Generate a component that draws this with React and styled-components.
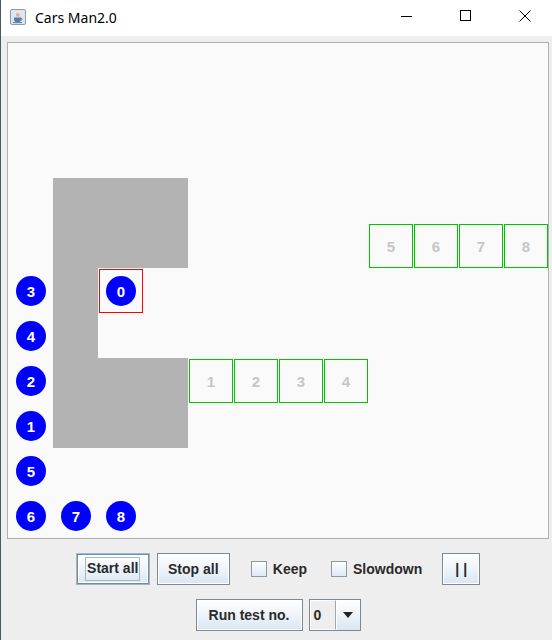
import styled, { createGlobalStyle } from "styled-components";

const GlobalStyle = createGlobalStyle`
    html, body {
        margin: 0;
        padding: 0;
        background: #eeeeee;
    }
    #root {
        width: 552px;
        height: 640px;
    }
`

const CELL = 45;

const walls = [
    { x: 45, y: 135, w: 135, h: 90 },
    { x: 45, y: 225, w: 45, h: 90 },
    { x: 45, y: 315, w: 135, h: 90 },
];

const slots = [
    { n: 1, c: 4, r: 7 }, { n: 2, c: 5, r: 7 }, { n: 3, c: 6, r: 7 }, { n: 4, c: 7, r: 7 },
    { n: 5, c: 8, r: 4 }, { n: 6, c: 9, r: 4 }, { n: 7, c: 10, r: 4 }, { n: 8, c: 11, r: 4 },
];

const cars = [
    { n: 3, c: 0, r: 5 }, { n: 4, c: 0, r: 6 }, { n: 2, c: 0, r: 7 }, { n: 1, c: 0, r: 8 },
    { n: 5, c: 0, r: 9 }, { n: 6, c: 0, r: 10 }, { n: 7, c: 1, r: 10 }, { n: 8, c: 2, r: 10 },
    { n: 0, c: 2, r: 5, selected: true },
];

function JavaIcon() {
    return (
        <svg width="16" height="16" viewBox="0 0 16 16">
            <rect x="0.5" y="0.5" width="15" height="15" rx="1.5" fill="#dfe6ee" stroke="#8a9aab" />
            <path d="M4 8.5h7v2.2c0 1.6-1.5 2.6-3.5 2.6S4 12.3 4 10.7z" fill="#5b7ea6" />
            <path d="M11 9.2c1.4 0 1.6 1.8 0 2" stroke="#5b7ea6" strokeWidth="1" fill="none" />
            <path d="M3 13.6h9" stroke="#5b7ea6" strokeWidth="1" />
            <path d="M7 7.5c-1-1 1-2 0-3.2M8.8 7.5c-0.8-0.9 0.9-1.6 0.1-2.8" stroke="#e8762d" strokeWidth="1" fill="none" />
        </svg>
    )
}

export default function App() {
    return (
        <Window>
            <GlobalStyle />
            <TitleBar>
                <TitleIcon><JavaIcon /></TitleIcon>
                <Title>Cars Man2.0</Title>
                <WinButtons>
                    <WinButton>
                        <svg width="12" height="12" viewBox="0 0 12 12"><path d="M0 6.5h11" stroke="#000" /></svg>
                    </WinButton>
                    <WinButton>
                        <svg width="12" height="12" viewBox="0 0 12 12"><rect x="0.5" y="0.5" width="10" height="10" fill="none" stroke="#000" /></svg>
                    </WinButton>
                    <WinButton>
                        <svg width="12" height="12" viewBox="0 0 12 12"><path d="M0.5 0.5l11 11M11.5 0.5l-11 11" stroke="#000" /></svg>
                    </WinButton>
                </WinButtons>
            </TitleBar>
            <Content>
                <Board>
                    {walls.map((w, i) => (
                        <Wall key={i} style={{ left: w.x, top: w.y, width: w.w, height: w.h }} />
                    ))}
                    {slots.map(s => (
                        <Slot key={'s' + s.n} style={{ left: s.c * CELL + 1, top: s.r * CELL + 1 }}>{s.n}</Slot>
                    ))}
                    {cars.map(c => (
                        <Cell key={'c' + c.n} $selected={c.selected} style={{ left: c.c * CELL + 1, top: c.r * CELL + 1 }}>
                            <Car>{c.n}</Car>
                        </Cell>
                    ))}
                </Board>
                <Controls>
                    <Row>
                        <Button $default $w={74}><Focus>Start all</Focus></Button>
                        <Button $w={73} $ml={7}>Stop all</Button>
                        <Check $ml={21}><Box />Keep</Check>
                        <Check $ml={24}><Box />Slowdown</Check>
                        <Button $w={38} $ml={20}>| |</Button>
                    </Row>
                    <Row>
                        <Button $w={107}>Run test no.</Button>
                        <Combo>
                            <ComboValue>0</ComboValue>
                            <ComboArrow>
                                <svg width="10" height="6" viewBox="0 0 10 6"><path d="M0 0h10L5 6z" fill="#222" /></svg>
                            </ComboArrow>
                        </Combo>
                    </Row>
                </Controls>
            </Content>
        </Window>
    )
}

const Window = styled.div`
    width: 552px;
    height: 640px;
    display: flex;
    flex-direction: column;
    background: #eeeeee;
    border-left: 1px solid #4a5a60;
    box-sizing: border-box;
    overflow: hidden;
`

const TitleBar = styled.div`
    height: 36px;
    flex-shrink: 0;
    background: #ffffff;
    display: flex;
    align-items: center;
    padding-left: 9px;
`

const TitleIcon = styled.div`
    width: 16px;
    height: 16px;
    display: flex;
    margin-top: -2px;
`

const Title = styled.div`
    margin-left: 9px;
    margin-top: -2px;
    font-family: "Noto Sans", "Open Sans", sans-serif;
    font-size: 14px;
    color: #000;
`

const WinButtons = styled.div`
    margin-left: auto;
    display: flex;
    height: 100%;
    margin-right: -2px;
`

const WinButton = styled.div`
    width: 59px;
    height: 100%;
    display: flex;
    align-items: center;
    justify-content: center;
    margin-top: -2px;
`

const Content = styled.div`
    flex: 1;
    display: flex;
    flex-direction: column;
    padding: 6px 3px 0 6px;
`

const Board = styled.div`
    position: relative;
    width: 540px;
    height: 495px;
    background: #fafafa;
    border: 1px solid #b0b0b0;
    overflow: hidden;
`

const Wall = styled.div`
    position: absolute;
    background: #b3b3b3;
`

const Slot = styled.div`
    position: absolute;
    width: 44px;
    height: 44px;
    box-sizing: border-box;
    border: 1px solid #00c400;
    display: flex;
    align-items: center;
    justify-content: center;
    font-family: "Liberation Sans", Arial, sans-serif;
    font-weight: bold;
    font-size: 15px;
    color: #c6c6c6;
`

const Cell = styled.div`
    position: absolute;
    width: 44px;
    height: 44px;
    box-sizing: border-box;
    border: 1px solid ${props => props.$selected ? '#ff0000' : 'transparent'};
    display: flex;
    align-items: center;
    justify-content: center;
`

const Car = styled.div`
    width: 30px;
    height: 30px;
    border-radius: 50%;
    background: #0000ff;
    color: #ffffff;
    display: flex;
    align-items: center;
    justify-content: center;
    font-family: "Liberation Sans", Arial, sans-serif;
    font-weight: bold;
    font-size: 15px;
`

const Controls = styled.div`
    display: flex;
    flex-direction: column;
    align-items: center;
    width: 542px;
    padding-top: 14px;
    gap: 14px;
`

const Row = styled.div`
    display: flex;
    align-items: center;
    justify-content: center;
    height: 32px;
`

const Button = styled.div`
    width: ${props => props.$w}px;
    height: 32px;
    margin-left: ${props => props.$ml || 0}px;
    box-sizing: border-box;
    display: flex;
    align-items: center;
    justify-content: center;
    border: 1px solid ${props => props.$default ? '#9fb6cf' : '#7a8a99'};
    box-shadow: ${props => props.$default ? 'inset 0 0 0 1px #7a8a99, inset 0 0 0 2px #ffffff' : 'inset 0 0 0 1px #ffffff'};
    background: linear-gradient(#ffffff 0%, #f3f7fb 35%, #dae6f2 100%);
    font-family: "Liberation Sans", Arial, sans-serif;
    font-weight: bold;
    font-size: 14px;
    color: #2a2a2a;
    white-space: nowrap;
`

const Focus = styled.span`
    border: 1px solid #a3b8cc;
    padding: 3px 1px 4px 1px;
    line-height: 15px;
`

const Check = styled.div`
    display: flex;
    align-items: center;
    gap: 6px;
    margin-left: ${props => props.$ml || 0}px;
    font-family: "Liberation Sans", Arial, sans-serif;
    font-weight: bold;
    font-size: 14px;
    color: #2a2a2a;
`

const Box = styled.span`
    width: 16px;
    height: 16px;
    box-sizing: border-box;
    border: 1px solid #8a99a6;
    background: linear-gradient(#ffffff, #dde8f3);
`

const Combo = styled.div`
    margin-left: 6px;
    width: 52px;
    height: 32px;
    box-sizing: border-box;
    border: 1px solid #7a8a99;
    display: flex;
`

const ComboValue = styled.div`
    width: 26px;
    box-sizing: border-box;
    border: 1px solid #ffffff;
    border-right: 1px solid #9aa8b5;
    background: #eeeeee;
    display: flex;
    align-items: center;
    padding-left: 3px;
    font-family: "Liberation Sans", Arial, sans-serif;
    font-weight: bold;
    font-size: 14px;
    color: #2a2a2a;
`

const ComboArrow = styled.div`
    flex: 1;
    display: flex;
    align-items: center;
    justify-content: center;
    background: linear-gradient(#ffffff 0%, #f3f7fb 35%, #dae6f2 100%);
    box-shadow: inset 1px 1px 0 #ffffff;
`
